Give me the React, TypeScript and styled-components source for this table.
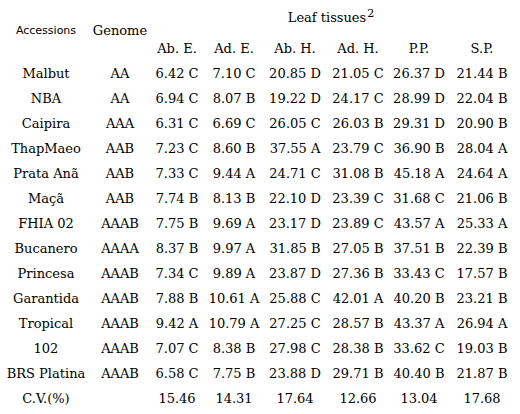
import React from "react";
import styled, { createGlobalStyle } from "styled-components";

const GlobalStyle = createGlobalStyle`
  html, body {
    margin: 0;
    padding: 0;
    background: #ffffff;
  }
`;

const columns = ["Ab. E.", "Ad. E.", "Ab. H.", "Ad. H.", "P.P.", "S.P."];

const rows: [string, string, string[]][] = [
  ["Malbut", "AA", ["6.42 C", "7.10 C", "20.85 D", "21.05 C", "26.37 D", "21.44 B"]],
  ["NBA", "AA", ["6.94 C", "8.07 B", "19.22 D", "24.17 C", "28.99 D", "22.04 B"]],
  ["Caipira", "AAA", ["6.31 C", "6.69 C", "26.05 C", "26.03 B", "29.31 D", "20.90 B"]],
  ["ThapMaeo", "AAB", ["7.23 C", "8.60 B", "37.55 A", "23.79 C", "36.90 B", "28.04 A"]],
  ["Prata Anã", "AAB", ["7.33 C", "9.44 A", "24.71 C", "31.08 B", "45.18 A", "24.64 A"]],
  ["Maçã", "AAB", ["7.74 B", "8.13 B", "22.10 D", "23.39 C", "31.68 C", "21.06 B"]],
  ["FHIA 02", "AAAB", ["7.75 B", "9.69 A", "23.17 D", "23.89 C", "43.57 A", "25.33 A"]],
  ["Bucanero", "AAAA", ["8.37 B", "9.97 A", "31.85 B", "27.05 B", "37.51 B", "22.39 B"]],
  ["Princesa", "AAAB", ["7.34 C", "9.89 A", "23.87 D", "27.36 B", "33.43 C", "17.57 B"]],
  ["Garantida", "AAAB", ["7.88 B", "10.61 A", "25.88 C", "42.01 A", "40.20 B", "23.21 B"]],
  ["Tropical", "AAAB", ["9.42 A", "10.79 A", "27.25 C", "28.57 B", "43.37 A", "26.94 A"]],
  ["102", "AAAB", ["7.07 C", "8.38 B", "27.98 C", "28.38 B", "33.62 C", "19.03 B"]],
  ["BRS Platina", "AAAB", ["6.58 C", "7.75 B", "23.88 D", "29.71 B", "40.40 B", "21.87 B"]],
  ["C.V.(%)", "", ["15.46", "14.31", "17.64", "12.66", "13.04", "17.68"]],
];

const Table = styled.div`
  display: grid;
  grid-template-columns: 92px 56px 58px 56px 66px 60px 62px 64px;
  grid-template-rows: 36px repeat(15, 25px);
  width: 520px;
  color: #000000;
  font-family: "DejaVu Serif", "Liberation Serif", serif;
  font-size: 13px;
`;

const Cell = styled.div`
  display: flex;
  align-items: center;
  justify-content: center;
  white-space: nowrap;
`;

const SideHead = styled(Cell)<{ $sans?: boolean }>`
  grid-row: 1 / 3;
  font-family: ${(p) =>
    p.$sans ? `"DejaVu Sans", "Liberation Sans", sans-serif` : "inherit"};
  font-size: ${(p) => (p.$sans ? "11px" : "13px")};
`;

const GroupHead = styled(Cell)`
  grid-row: 1;
  grid-column: 3 / 9;
  padding-bottom: 2px;

  sup {
    font-size: 11px;
    line-height: 0;
    position: relative;
    top: -3px;
    margin-left: 1px;
  }
`;

const App = () => {
  return (
    <>
      <GlobalStyle />
      <Table>
        <SideHead $sans>Accessions</SideHead>
        <SideHead>Genome</SideHead>
        <GroupHead>
          Leaf tissues<sup>2</sup>
        </GroupHead>
        {columns.map((c) => (
          <Cell key={c}>{c}</Cell>
        ))}
        {rows.map(([name, genome, values]) => (
          <React.Fragment key={name}>
            <Cell>{name}</Cell>
            <Cell>{genome}</Cell>
            {values.map((v, i) => (
              <Cell key={i}>{v}</Cell>
            ))}
          </React.Fragment>
        ))}
      </Table>
    </>
  );
};

export default App;
